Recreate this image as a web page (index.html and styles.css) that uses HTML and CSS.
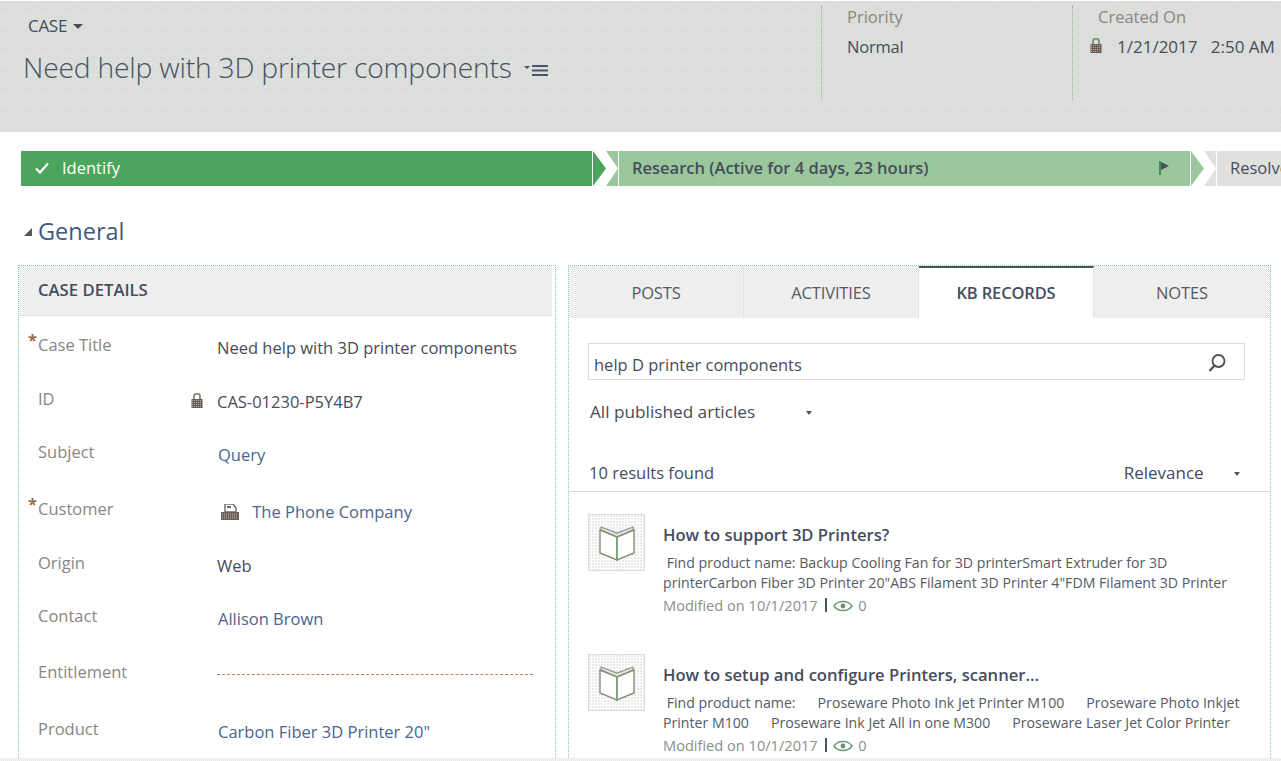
FILE: index.html
```html
<!DOCTYPE html>
<html lang="en">
<head>
<meta charset="utf-8">
<title>Case</title>
<link rel="stylesheet" href="styles.css">
</head>
<body>
<svg class="defs" width="0" height="0" aria-hidden="true">
  <symbol id="lock" viewBox="0 0 12 15">
    <path d="M3 7V3.500a3 3 0 0 1 6 0V7" fill="none" stroke="#7d9079" stroke-width="1.800"/>
    <rect x="0.500" y="6" width="11" height="9" fill="#6a5b52"/>
    <path d="M1 7.500h10M1 9.500h10M1 11.500h10M1 13.500h10" stroke="#a9b2ac" stroke-width="1" stroke-dasharray="1 1"/>
  </symbol>
  <symbol id="book" viewBox="0 0 36 36">
    <path d="M2 2 18 8 34 2V5L18 12 2 5Z" fill="#e2e4e2" stroke="#8a9480" stroke-width="1.200"/>
    <path d="M1 5 18 12V35L1 28Z" fill="#fff" stroke="#85907a" stroke-width="1.400"/>
    <path d="M35 5 18 12V35L35 28Z" fill="#fff" stroke="#85907a" stroke-width="1.400"/>
    <path d="M18 12V35" stroke="#6fa878" stroke-width="1.400"/>
  </symbol>
  <symbol id="eye" viewBox="0 0 20 14">
    <path d="M1 7C5 1 15 1 19 7 15 13 5 13 1 7Z" fill="none" stroke="#6f9a78" stroke-width="1.400"/>
    <circle cx="10" cy="7" r="2.400" fill="#6f8f78"/>
  </symbol>
</svg>

<header class="head">
  <div class="head-main">
    <div class="entity">CASE <span class="caret"></span></div>
    <h1 class="title">Need help with 3D printer components
      <svg class="menu-icon" viewBox="0 0 24 13" width="24" height="13"><path d="M0 2h6L3 5Z" fill="#4a5468"/><path d="M8 2h16M8 6.500h16M8 11h16" stroke="#4a5468" stroke-width="2.200"/></svg>
    </h1>
  </div>
  <div class="head-col head-priority">
    <div class="head-label">Priority</div>
    <div class="head-value">Normal</div>
  </div>
  <div class="head-col head-created">
    <div class="head-label head-label-created">Created On</div>
    <div class="head-value head-date"><svg class="lock lock-head"><use href="#lock"/></svg>1/21/2017&nbsp;&nbsp; 2:50 AM</div>
  </div>
</header>

<nav class="process">
  <div class="stage stage-done">
    <svg class="check" viewBox="0 0 14 12" width="14" height="12"><path d="M1 6.500 5 10.500 13 1.500" fill="none" stroke="#fff" stroke-width="2.200"/></svg>
    Identify
  </div>
  <svg class="chev" viewBox="0 0 27 35" width="27" height="35"><path d="M1 0 14 17.500 1 35Z" fill="#4ca55c"/><path d="M14 0H26V35H14L26 17.500Z" fill="#9ac79c"/></svg>
  <div class="stage stage-active">
    <span>Research (Active for 4 days, 23 hours)</span>
    <svg class="flag" viewBox="0 0 10 14" width="10" height="14"><path d="M1 0V14" stroke="#2f7d46" stroke-width="1.600"/><path d="M2 1 10 5 2 9Z" fill="#454f60"/></svg>
  </div>
  <svg class="chev" viewBox="0 0 27 35" width="27" height="35"><path d="M1 0 14 17.500 1 35Z" fill="#9ac79c"/><path d="M14 0H26V35H14L26 17.500Z" fill="#dfe1df"/></svg>
  <div class="stage stage-next">Resolve</div>
</nav>

<div class="section"><span class="tri"></span>General</div>

<main class="columns">
  <section class="panel panel-left">
    <div class="panel-head">CASE DETAILS</div>
    <div class="row h54"><div class="label req">Case Title</div><div class="value">Need help with 3D printer components</div></div>
    <div class="row h53"><div class="label">ID</div><div class="value"><svg class="lock lock-field"><use href="#lock"/></svg>CAS-01230-P5Y4B7</div></div>
    <div class="row h57"><div class="label">Subject</div><div class="value link">Query</div></div>
    <div class="row h54"><div class="label req">Customer</div><div class="value link">
      <svg class="acct" viewBox="0 0 18 16" width="18" height="16"><path d="M4 0H12L15 4V8H4Z" fill="#fff" stroke="#6d6a63" stroke-width="1.400"/><path d="M6 3H10" stroke="#6d6a63" stroke-width="2"/><rect x="0" y="8" width="18" height="8" fill="#6d5f55"/><path d="M1 10h16M1 12h16M1 14h16" stroke="#b0b6ae" stroke-dasharray="1 1"/></svg>
      The Phone Company</div></div>
    <div class="row h53"><div class="label">Origin</div><div class="value">Web</div></div>
    <div class="row h56"><div class="label">Contact</div><div class="value link">Allison Brown</div></div>
    <div class="row h57"><div class="label">Entitlement</div><div class="value dashed"></div></div>
    <div class="row h54"><div class="label">Product</div><div class="value link">Carbon Fiber 3D Printer 20"</div></div>
  </section>

  <section class="panel panel-right">
    <div class="tabs">
      <div class="tab">POSTS</div>
      <div class="tab">ACTIVITIES</div>
      <div class="tab tab-on">KB RECORDS</div>
      <div class="tab">NOTES</div>
    </div>
    <div class="search">
      <span class="search-text">help D printer components</span>
      <svg class="mag" viewBox="0 0 20 20" width="20" height="20"><circle cx="11.500" cy="8" r="6" fill="none" stroke="#4a4f58" stroke-width="1.800"/><path d="M7.500 12.500 2.500 18" stroke="#4a4f58" stroke-width="2.200"/></svg>
    </div>
    <div class="filter">All published articles <span class="mini"></span></div>
    <div class="results">
      <span>10 results found</span>
      <span class="sort">Relevance <span class="mini"></span></span>
    </div>
    <article class="art">
      <div class="thumb"><svg class="book"><use href="#book"/></svg></div>
      <div class="art-body">
        <h2 class="art-title">How to support 3D Printers?</h2>
        <p class="art-text">&nbsp;Find product name: Backup Cooling Fan for 3D printerSmart Extruder for 3D printerCarbon Fiber 3D Printer 20"ABS Filament 3D Printer 4"FDM Filament 3D Printer</p>
        <div class="meta">Modified on 10/1/2017 <span class="bar"></span><svg class="eye"><use href="#eye"/></svg> 0</div>
      </div>
    </article>
    <article class="art">
      <div class="thumb"><svg class="book"><use href="#book"/></svg></div>
      <div class="art-body">
        <h2 class="art-title">How to setup and configure Printers, scanner…</h2>
        <p class="art-text">&nbsp;Find product name: &nbsp; &nbsp; &nbsp;Proseware Photo Ink Jet Printer M100 &nbsp; &nbsp; &nbsp;Proseware Photo Inkjet Printer M100 &nbsp; &nbsp; &nbsp;Proseware Ink Jet All in one M300 &nbsp; &nbsp; &nbsp;Proseware Laser Jet Color Printer</p>
        <div class="meta">Modified on 10/1/2017 <span class="bar"></span><svg class="eye"><use href="#eye"/></svg> 0</div>
      </div>
    </article>
  </section>
</main>
<div class="foot"></div>
</body>
</html>
```

FILE: styles.css
```css
* { box-sizing: border-box; }
html, body { margin: 0; padding: 0; height: 761px; overflow: hidden; background: #fff; }
body {
  width: 1281px;
  font-family: "Open Sans", "Noto Sans", sans-serif;
  font-size: 16.5px;
  color: #464c5c;
  display: flex;
  flex-direction: column;
}
.defs { position: absolute; }

.head {
  flex: none;
  margin-top: 1px;
  height: 131px;
  display: flex;
  background-color: #dcdedc;
  background-image: radial-gradient(circle at 1px 1px, #e9ebe9 0.6px, transparent 0.8px);
  background-size: 5px 10px;
  background-position: 0 3px;
}
.head-main { width: 821px; padding: 14px 0 0 23px; flex: none; }
.entity { padding-left: 5px; font-size: 17px; letter-spacing: -0.3px; color: #464c5c; line-height: 22px; }
.caret {
  display: inline-block; width: 0; height: 0; margin: 0 0 3px 2px;
  border: 5px solid transparent; border-top: 5px solid #464c5c; border-bottom: 0;
}
.title {
  margin: 11px 0 0; font-size: 28.25px; font-weight: 300; line-height: 38px;
  color: #48505f; letter-spacing: -0.2px; white-space: nowrap;
}
.menu-icon { margin-left: 5px; vertical-align: 1px; }
.head-col {
  flex: none; height: 94px; margin-top: 5px;
  background-color: #dcdedc;
  border-left: 1px dotted #9db09f;
  white-space: nowrap;
}
.head-priority { width: 251px; padding-left: 25px; }
.head-created { flex: 1; padding-left: 17px; min-width: 0; }
.head-label { font-size: 16.5px; color: #8a8681; line-height: 22px; }
.head-label-created { padding-left: 8px; }
.head-value { font-size: 16.5px; line-height: 24px; margin-top: 7px; letter-spacing: -0.2px; }
.head-date { font-size: 17px; letter-spacing: 0; }
.lock { width: 12px; height: 15px; }
.lock-head { margin-right: 15px; vertical-align: 0; }

.process { flex: none; margin: 19px 0 0 21px; height: 35px; display: flex; width: 1400px; }
.stage { height: 35px; padding-bottom: 2px; display: flex; align-items: center; white-space: nowrap; }
.stage-done { width: 571px; background: #4ca55c; color: #fff; padding-left: 14px; }
.check { margin-right: 13px; }
.stage-active { width: 571px; background: #9ac79c; padding-left: 13px; padding-right: 21px; justify-content: space-between; font-weight: 600; }
.stage-next { flex: 1; background: #dfe1df; padding-left: 13px; }
.chev { flex: none; }

.section { flex: none; margin: 27px 0 0 24px; height: 36px; line-height: 36px; font-size: 23.5px; color: #3f5a80; }
.tri {
  display: inline-block; width: 0; height: 0; margin-right: 6px; vertical-align: 4px;
  border-style: solid; border-width: 0 0 8px 8px; border-color: transparent transparent #555 transparent;
}

.columns { flex: none; margin: 16px 0 0 18px; display: flex; gap: 12px; height: 493px; overflow: hidden; align-items: flex-start; }
.panel { border: 1px dotted #86cf94; border-bottom: 0; height: 493px; overflow: hidden; flex: none; }
.panel-left { width: 538px; }
.panel-right { width: 703px; }

.panel-head {
  height: 50px; line-height: 48px; padding-left: 19px; margin-right: 3px; margin-bottom: 15px;
  font-size: 16.7px; font-weight: 600;
  background: repeating-conic-gradient(#e8e8e8 0 25%, #f5f5f5 0 50%) 0 0 / 2px 2px;
  border-bottom: 1px solid #dfdfdf;
}
.row { position: relative; display: flex; padding-left: 19px; }
.h53 { height: 53px; }
.h54 { height: 54px; }
.h56 { height: 56px; }
.h57 { height: 57px; }
.label { width: 179px; flex: none; color: #8a8681; line-height: 24px; padding-top: 2px; }
.req::before { content: "*"; position: absolute; left: 9px; top: -3px; color: #9a6a48; font-weight: 700; }
.value { padding-top: 5px; line-height: 24px; white-space: nowrap; }
.link { color: #4a6690; padding-left: 1px; }
.dashed { margin-top: 16px; padding: 0; width: 316px; height: 1px; border-top: 1px dashed #c47a6a; }
.lock-field { position: absolute; left: 172px; top: 8px; }
.acct { margin: 0 9px 0 3px; vertical-align: -2px; }

.tabs { display: flex; height: 52px; }
.tab {
  width: 175px; height: 52px; text-align: center; line-height: 54px;
  background: repeating-conic-gradient(#e8e8e8 0 25%, #f5f5f5 0 50%) 0 0 / 2px 2px;
  border-right: 1px solid #e2e2e2; color: #545a66; letter-spacing: -0.15px;
}
.tab:last-child { flex: 1; border-right: 0; }
.tab-on { background: #fff; border-top: 2px solid #4a5468; line-height: 50px; font-weight: 600; color: #464c5c; }

.search {
  margin: 25px 25px 0 19px; height: 37px; border: 1px solid #dcdcdc;
  display: flex; align-items: center; justify-content: space-between; padding: 0 17px 0 5px;
}
.search-text { padding-top: 6px; }
.mag { margin-top: 3px; }
.filter { margin: 20px 0 0 21px; line-height: 24px; font-size: 17.2px; font-weight: 500; }
.mini { display: inline-block; width: 0; height: 0; margin-left: 46px; vertical-align: 3px; border: 3px solid transparent; border-top: 4px solid #555; border-bottom: 0; }
.results {
  margin-top: 37px; padding: 0 30px 6px 20px; height: 31px; display: flex; justify-content: space-between;
  border-bottom: 1px solid #dcdcdc; line-height: 24px; align-items: center;
}
.sort { font-size: 17px; font-weight: 500; }
.sort .mini { margin-left: 26px; }

.art { display: flex; margin: 22px 0 0 19px; height: 118px; }
.thumb {
  width: 57px; height: 57px; flex: none; border: 1px solid #dcdcdc; display: flex; align-items: center; justify-content: center;
  background: #fff radial-gradient(circle at 1px 1px, #d2d2d2 0.6px, transparent 0.8px) 0 0 / 3px 3px;
}
.book { width: 36px; height: 36px; }
.art-body { margin-left: 18px; width: 590px; }
.art-title { margin: 9px 0 0; font-size: 16.6px; font-weight: 600; line-height: 24px; color: #464c5c; }
.art-text { margin: 6px 0 0; font-size: 14.15px; line-height: 20px; color: #555b66; height: 40px; overflow: hidden; }
.meta { font-size: 14.6px; line-height: 20px; color: #8a8f8a; margin-top: 2px; }
.bar { display: inline-block; width: 2px; height: 14px; background: #4a5468; margin: 0 5px 0 4px; vertical-align: -1px; }
.eye { width: 20px; height: 14px; margin: 0 1px; vertical-align: -2px; }

.foot { flex: none; height: 3px; background: repeating-conic-gradient(#e8e8e8 0 25%, #f5f5f5 0 50%) 0 0 / 2px 2px; }
```
